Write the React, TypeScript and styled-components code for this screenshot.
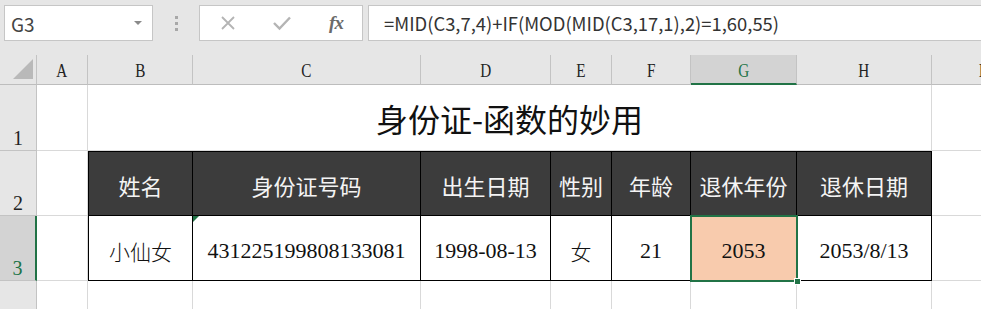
import React from "react";
import styled, { createGlobalStyle, css } from "styled-components";

const GlobalStyle = createGlobalStyle`
  html, body { margin: 0; padding: 0; background: #ffffff; }
  body { width: 981px; height: 309px; overflow: hidden; }
  * { box-sizing: border-box; }
`;

const SANS = `"Microsoft YaHei", "Noto Sans CJK SC", "Noto Sans", sans-serif`;
const SERIF = `"Liberation Serif", "Noto Sans CJK SC", serif`;
const GREEN = "#217346";
const GRID = "#d9d9d9";
const HEAD_BG = "#e6e6e6";
const HEAD_LINE = "#c3c3c3";

const Page = styled.div`
  width: 981px;
  height: 309px;
  overflow: hidden;
  background: #fff;
  font-family: ${SANS};
`;

const Toolbar = styled.div`
  height: 55px;
  background: ${HEAD_BG};
  display: flex;
  align-items: flex-start;
  padding: 5px 0 0 4px;
`;

const NameBox = styled.div`
  width: 149px;
  height: 36px;
  background: #fff;
  border: 1px solid #c6c6c6;
  display: flex;
  align-items: center;
  justify-content: space-between;
  padding: 0 10px 0 6px;
  font-size: 19px;
  color: #444;
`;

const Caret = styled.span`
  width: 0;
  height: 0;
  border-left: 4px solid transparent;
  border-right: 4px solid transparent;
  border-top: 4px solid #8a8a8a;
`;

const Dots = styled.div`
  width: 46px;
  height: 36px;
  display: flex;
  flex-direction: column;
  align-items: center;
  justify-content: center;
  gap: 3px;
`;

const Dot = styled.span`
  width: 3px;
  height: 3px;
  background: #a8a8a8;
`;

const FxBox = styled.div`
  width: 164px;
  height: 36px;
  background: #fff;
  border: 1px solid #c6c6c6;
  display: flex;
  align-items: center;
  padding-left: 18px;
`;

const FxIcon = styled.span<{ $w: number }>`
  width: ${(p) => p.$w}px;
  display: flex;
  align-items: center;
  justify-content: center;
`;

const FxText = styled.span`
  font-family: "Liberation Serif", serif;
  font-style: italic;
  font-weight: bold;
  font-size: 19px;
  color: #6a6a6a;
  letter-spacing: -1px;
`;

const FormulaBox = styled.div`
  flex: 1;
  height: 36px;
  margin-left: 5px;
  background: #fff;
  border: 1px solid #c6c6c6;
  border-right: none;
  display: flex;
  align-items: center;
  padding-left: 15px;
  font-size: 18.4px;
  color: #333;
  white-space: nowrap;
`;

const COLS = [37, 51, 105, 228, 130, 61, 79, 106, 135, 100];
const ROWS = [30, 66, 65, 65, 60];

const Sheet = styled.div`
  display: grid;
  grid-template-columns: ${COLS.map((c) => c + "px").join(" ")};
  grid-template-rows: ${ROWS.map((r) => r + "px").join(" ")};
  position: relative;
`;

const Corner = styled.div`
  background: ${HEAD_BG};
  border-right: 1px solid ${HEAD_LINE};
  border-bottom: 1px solid #bdbdbd;
  display: flex;
  align-items: flex-end;
  justify-content: flex-end;
  padding: 0 3px 5px 0;
`;

const ColHead = styled.div<{ $sel?: boolean }>`
  background: ${(p) => (p.$sel ? "#d3d3d3" : HEAD_BG)};
  border-right: 1px solid ${HEAD_LINE};
  border-bottom: ${(p) => (p.$sel ? `2px solid ${GREEN}` : "1px solid #bdbdbd")};
  display: flex;
  align-items: center;
  justify-content: center;
  padding-top: ${(p) => (p.$sel ? "3px" : "2px")};
  font-family: ${SERIF};
  font-size: 19px;
  color: ${(p) => (p.$sel ? GREEN : "#222")};
  overflow: hidden;
`;

const Letter = styled.span`
  display: inline-block;
  transform: scaleX(0.8);
`;

const RowHead = styled.div<{ $sel?: boolean }>`
  background: ${(p) => (p.$sel ? "#d3d3d3" : HEAD_BG)};
  border-right: ${(p) => (p.$sel ? `2px solid ${GREEN}` : `1px solid ${HEAD_LINE}`)};
  border-bottom: 1px solid ${HEAD_LINE};
  display: flex;
  align-items: flex-end;
  justify-content: center;
  padding-bottom: 2px;
  font-family: ${SERIF};
  font-size: 20px;
  line-height: 20px;
  color: ${(p) => (p.$sel ? GREEN : "#222")};
`;

const Cell = styled.div`
  border-right: 1px solid ${GRID};
  border-bottom: 1px solid ${GRID};
  background: #fff;
`;

const Title = styled.div`
  grid-column: span 7;
  border-right: 1px solid ${GRID};
  border-bottom: 1px solid ${GRID};
  display: flex;
  align-items: flex-end;
  justify-content: center;
  padding-bottom: 12px;
  font-family: ${SANS};
  font-size: 32px;
  line-height: 40px;
  color: #111;
`;

const HeadCell = styled.div<{ $first?: boolean }>`
  background: #3c3c3c;
  border-top: 1px solid #000;
  border-right: 1px solid #000;
  border-bottom: 1px solid #000;
  border-left: ${(p) => (p.$first ? "1px solid #000" : "none")};
  display: flex;
  align-items: center;
  justify-content: center;
  padding-top: 3px;
  font-family: ${SANS};
  font-size: 22px;
  color: #f4f4f4;
`;

const DataCell = styled.div<{ $first?: boolean; $sel?: boolean; $cjk?: boolean }>`
  position: relative;
  background: ${(p) => (p.$sel ? "#f8cbad" : "#fff")};
  border-right: 1px solid #000;
  border-bottom: 1px solid #000;
  border-left: ${(p) => (p.$first ? "1px solid #000" : "none")};
  display: flex;
  align-items: center;
  justify-content: center;
  padding-top: 6px;
  font-family: ${(p) => (p.$cjk ? SANS : SERIF)};
  font-size: ${(p) => (p.$cjk ? "21px" : "22px")};
  font-weight: ${(p) => (p.$cjk ? 300 : 400)};
  color: #111;
  ${(p) =>
    p.$sel &&
    css`
      outline: 2px solid ${GREEN};
      outline-offset: -1px;
      z-index: 2;
    `}
`;

const TextFlag = styled.span`
  position: absolute;
  left: 0;
  top: 0;
  width: 0;
  height: 0;
  border-top: 6px solid ${GREEN};
  border-right: 6px solid transparent;
`;

const FillHandle = styled.span`
  position: absolute;
  right: -5px;
  bottom: -5px;
  width: 7px;
  height: 7px;
  background: ${GREEN};
  border: 1px solid #fff;
`;

const columns = ["A", "B", "C", "D", "E", "F", "G", "H", "I"];
const headers = ["姓名", "身份证号码", "出生日期", "性别", "年龄", "退休年份", "退休日期"];

export default function App() {
  return (
    <Page>
      <GlobalStyle />
      <Toolbar>
        <NameBox>
          <span>G3</span>
          <Caret />
        </NameBox>
        <Dots>
          <Dot />
          <Dot />
          <Dot />
        </Dots>
        <FxBox>
          <FxIcon $w={20}>
            <svg width="16" height="16" viewBox="0 0 16 16">
              <path d="M2 2 L14 14 M14 2 L2 14" stroke="#b4b4b4" strokeWidth="1.8" fill="none" />
            </svg>
          </FxIcon>
          <FxIcon $w={88}>
            <svg width="20" height="16" viewBox="0 0 20 16">
              <path d="M2 8 L7.5 13.5 L18 2.5" stroke="#b4b4b4" strokeWidth="2.4" fill="none" />
            </svg>
          </FxIcon>
          <FxIcon $w={20}>
            <FxText>fx</FxText>
          </FxIcon>
        </FxBox>
        <FormulaBox>=MID(C3,7,4)+IF(MOD(MID(C3,17,1),2)=1,60,55)</FormulaBox>
      </Toolbar>
      <Sheet>
        <Corner>
          <svg width="20" height="20" viewBox="0 0 20 20">
            <path d="M20 0 L20 20 L0 20 Z" fill="#b9b9b9" />
          </svg>
        </Corner>
        {columns.map((c) => (
          <ColHead key={c} $sel={c === "G"}>
            <Letter>{c}</Letter>
          </ColHead>
        ))}

        <RowHead>1</RowHead>
        <Cell />
        <Title>身份证-函数的妙用</Title>
        <Cell />

        <RowHead>2</RowHead>
        <Cell />
        {headers.map((h, i) => (
          <HeadCell key={h} $first={i === 0}>
            {h}
          </HeadCell>
        ))}
        <Cell />

        <RowHead $sel>3</RowHead>
        <Cell />
        <DataCell $first $cjk>小仙女</DataCell>
        <DataCell>
          <TextFlag />
          431225199808133081
        </DataCell>
        <DataCell>1998-08-13</DataCell>
        <DataCell $cjk>女</DataCell>
        <DataCell>21</DataCell>
        <DataCell $sel>
          2053
          <FillHandle />
        </DataCell>
        <DataCell>2053/8/13</DataCell>
        <Cell />

        <RowHead>5</RowHead>
        {columns.map((c) => (
          <Cell key={c} />
        ))}
      </Sheet>
    </Page>
  );
}
